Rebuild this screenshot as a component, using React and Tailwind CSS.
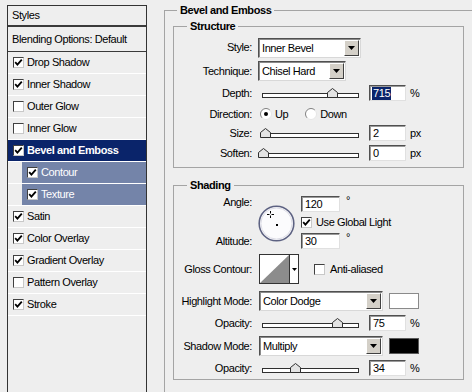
import React from "react";

const effects = [
  { name: "Drop Shadow", on: true },
  { name: "Inner Shadow", on: true },
  { name: "Outer Glow", on: false },
  { name: "Inner Glow", on: false },
  { name: "Bevel and Emboss", on: true, selected: true },
  { name: "Contour", on: true, sub: true },
  { name: "Texture", on: true, sub: true },
  { name: "Satin", on: true },
  { name: "Color Overlay", on: true },
  { name: "Gradient Overlay", on: true },
  { name: "Pattern Overlay", on: false },
  { name: "Stroke", on: true },
];

function Check({ on }) {
  return (
    <span className="flex h-[11px] w-[11px] shrink-0 items-center justify-center border border-t-[#404040] border-l-[#404040] border-b-[#c8c8c8] border-r-[#c8c8c8] bg-white">
      {on && (
        <svg width="9" height="9" viewBox="0 0 9 9">
          <path d="M1.2 4.2 L3.4 6.6 L7.8 1.6" fill="none" stroke="#000" strokeWidth="1.8" />
        </svg>
      )}
    </span>
  );
}

function Radio({ on }) {
  return (
    <svg width="12" height="12" viewBox="0 0 12 12" className="shrink-0">
      <circle cx="6" cy="6" r="5.5" fill="#fff" />
      <path d="M2.11 9.89 A5.5 5.5 0 0 1 9.89 2.11" fill="none" stroke="#808080" />
      <path d="M9.89 2.11 A5.5 5.5 0 0 1 2.11 9.89" fill="none" stroke="#e6e6e6" />
      {on && <circle cx="6" cy="6" r="2" fill="#000" />}
    </svg>
  );
}

function DownArrow() {
  return (
    <svg width="7" height="4" viewBox="0 0 7 4">
      <polygon points="0,0 7,0 3.5,4" fill="#000" />
    </svg>
  );
}

function Select({ value, className }) {
  return (
    <div
      className={`flex h-[20px] items-center border border-t-[#505050] border-l-[#505050] border-b-[#d8d8d8] border-r-[#d8d8d8] bg-white shadow-[inset_1px_1px_0_#8a8a8a] ${className}`}
    >
      <span className="flex-1 pl-[3px] pt-[1px]">{value}</span>
      <span className="mr-[1px] flex h-[16px] w-[15px] items-center justify-center border border-t-white border-l-white border-b-[#404040] border-r-[#404040] bg-[#d4d0c8]">
        <DownArrow />
      </span>
    </div>
  );
}

function Field({ value, selected, className }) {
  return (
    <div
      className={`flex h-[16px] items-center border border-t-[#505050] border-l-[#505050] border-b-[#e0e0e0] border-r-[#e0e0e0] bg-white pl-[2px] shadow-[inset_1px_1px_0_#9a9a9a] ${className}`}
    >
      {selected ? (
        <span className="bg-[#0a246a] px-[1px] text-white">{value}</span>
      ) : (
        <span className="pl-[1px]">{value}</span>
      )}
    </div>
  );
}

function Slider({ pos }) {
  return (
    <div className="relative h-[10px] w-[97px]">
      <div className="absolute inset-x-0 bottom-0 h-[5px] border border-[#2f2f2f] bg-white" />
      <svg
        width="11"
        height="10"
        viewBox="0 0 11 10"
        className="absolute bottom-0"
        style={{ left: pos - 5 }}
      >
        <polygon points="0.5,9.5 0.5,4.5 5.5,0.5 10.5,4.5 10.5,9.5" fill="#e4e4e4" stroke="#2f2f2f" />
      </svg>
    </div>
  );
}

function Row({ label, className, children }) {
  return (
    <div className={`flex items-center ${className}`}>
      <span className="w-[78px] shrink-0 text-right">{label}</span>
      <div className="ml-[6px] flex items-center">{children}</div>
    </div>
  );
}

function AngleDial() {
  return (
    <svg width="37" height="37" viewBox="0 0 37 37">
      <circle cx="18.5" cy="18.5" r="17.3" fill="#fbfbfd" stroke="#5d6282" strokeWidth="1.6" />
      <circle cx="18.5" cy="18.5" r="15.6" fill="none" stroke="#dcdce6" strokeWidth="1" />
      <path d="M12.5 6 V8.5 M12.5 10.5 V13 M9 9.5 H11.5 M13.5 9.5 H16" stroke="#000" strokeWidth="1" />
      <rect x="18" y="19" width="2" height="2" fill="#000" />
    </svg>
  );
}

function GlossContour() {
  return (
    <div className="flex h-[30px] w-[40px] border border-[#333] bg-white">
      <svg width="29" height="28" viewBox="0 0 29 28">
        <polygon points="0,28 29,0 29,28" fill="#8c8c8c" />
      </svg>
      <div className="flex flex-1 items-center justify-center border-l border-[#333]">
        <svg width="5" height="3" viewBox="0 0 5 3">
          <polygon points="0,0 5,0 2.5,3" fill="#000" />
        </svg>
      </div>
    </div>
  );
}

export default function App() {
  return (
    <div className="flex h-[392px] w-[472px] overflow-hidden bg-[#eeeeee] font-['Liberation_Sans',Arial,sans-serif] text-[11px] leading-[13px] tracking-[-0.4px] text-black">
      {/* Styles list */}
      <div className="ml-[7px] mt-[5px] h-[400px] w-[140px] shrink-0 border border-b-0 border-[#333]">
        <div className="flex h-[21px] items-center border-b-2 border-[#3a3a3a] pl-[4px]">Styles</div>
        <div className="flex h-[25px] items-center border-b border-[#3a3a3a] pl-[4px]">
          Blending Options: Default
        </div>
        {effects.map((fx) => (
          <div key={fx.name} className="h-[22px] border-b border-white">
            {fx.sub ? (
              <div className="ml-[14px] flex h-full items-center bg-[#7484a9] pl-[5px] text-white">
                <Check on={fx.on} />
                <span className="ml-[3px]">{fx.name}</span>
              </div>
            ) : (
              <div
                className={`flex h-full items-center pl-[5px] ${
                  fx.selected ? "bg-[#0a246a] font-bold text-white" : ""
                }`}
              >
                <Check on={fx.on} />
                <span className="ml-[3px]">{fx.name}</span>
              </div>
            )}
          </div>
        ))}
      </div>

      {/* Settings */}
      <div className="pl-[17px] pt-[4px]">
        <fieldset className="w-[320px] border border-[#a4a4a4] pb-[30px]">
          <legend className="ml-[12px] px-[3px] font-bold">Bevel and Emboss</legend>

          <fieldset className="ml-[8px] mt-[3px] w-[291px] border border-[#a4a4a4] pb-[6px]">
            <legend className="ml-[13px] px-[3px] font-bold">Structure</legend>

            <Row label="Style:" className="mt-[4px] h-[21px]">
              <Select value="Inner Bevel" className="w-[103px]" />
            </Row>
            <Row label="Technique:" className="mt-[2px] h-[22px]">
              <Select value="Chisel Hard" className="w-[88px]" />
            </Row>
            <Row label="Depth:" className="mt-[3px] h-[16px]">
              <div className="ml-[4px]">
                <Slider pos={70} />
              </div>
              <Field value="715" selected className="ml-[10px] w-[37px]" />
              <span className="ml-[4px]">%</span>
            </Row>
            <Row label="Direction:" className="mt-[5px] h-[16px]">
              <div className="ml-[2px] flex items-center">
                <Radio on />
                <span className="ml-[3px]">Up</span>
              </div>
              <div className="ml-[17px] flex items-center">
                <Radio />
                <span className="ml-[3px]">Down</span>
              </div>
            </Row>
            <Row label="Size:" className="mt-[3px] h-[16px]">
              <div className="ml-[4px]">
                <Slider pos={3} />
              </div>
              <Field value="2" className="ml-[10px] w-[37px]" />
              <span className="ml-[4px]">px</span>
            </Row>
            <Row label="Soften:" className="mt-[4px] h-[16px]">
              <div className="ml-[4px]">
                <Slider pos={1} />
              </div>
              <Field value="0" className="ml-[10px] w-[37px]" />
              <span className="ml-[4px]">px</span>
            </Row>
          </fieldset>

          <fieldset className="ml-[8px] mt-[11px] w-[291px] border border-[#a4a4a4] pb-[3px]">
            <legend className="ml-[13px] px-[3px] font-bold">Shading</legend>

            <div className="mt-[4px] flex h-[53px]">
              <div className="flex w-[78px] shrink-0 flex-col justify-between text-right">
                <span>Angle:</span>
                <span className="mb-[1px]">Altitude:</span>
              </div>
              <div className="ml-[6px] mt-[9px]">
                <AngleDial />
              </div>
              <div className="ml-[6px] flex flex-col justify-between">
                <div className="flex items-start">
                  <Field value="120" className="w-[39px]" />
                  <span className="ml-[6px] -mt-[2px]">°</span>
                </div>
                <div className="flex items-center">
                  <Check on />
                  <span className="ml-[4px]">Use Global Light</span>
                </div>
                <div className="flex items-start">
                  <Field value="30" className="w-[39px]" />
                  <span className="ml-[6px] -mt-[2px]">°</span>
                </div>
              </div>
            </div>

            <Row label="Gloss Contour:" className="mt-[5px] h-[30px]">
              <div className="ml-[1px]">
                <GlossContour />
              </div>
              <div className="ml-[15px] flex items-center">
                <Check />
                <span className="ml-[5px]">Anti-aliased</span>
              </div>
            </Row>
            <Row label="Highlight Mode:" className="mt-[7px] h-[20px]">
              <Select value="Color Dodge" className="ml-[1px] w-[124px]" />
              <div className="ml-[6px] h-[16px] w-[30px] border border-[#8a8a8a] bg-white" />
            </Row>
            <Row label="Opacity:" className="mt-[4px] h-[16px]">
              <div className="ml-[4px]">
                <Slider pos={75} />
              </div>
              <Field value="75" className="ml-[10px] w-[37px]" />
              <span className="ml-[4px]">%</span>
            </Row>
            <Row label="Shadow Mode:" className="mt-[5px] h-[20px]">
              <Select value="Multiply" className="ml-[1px] w-[124px]" />
              <div className="ml-[6px] h-[16px] w-[30px] border border-[#5a5a5a] bg-black" />
            </Row>
            <Row label="Opacity:" className="mt-[4px] h-[16px]">
              <div className="ml-[4px]">
                <Slider pos={33} />
              </div>
              <Field value="34" className="ml-[10px] w-[37px]" />
              <span className="ml-[4px]">%</span>
            </Row>
          </fieldset>
        </fieldset>
      </div>
    </div>
  );
}
